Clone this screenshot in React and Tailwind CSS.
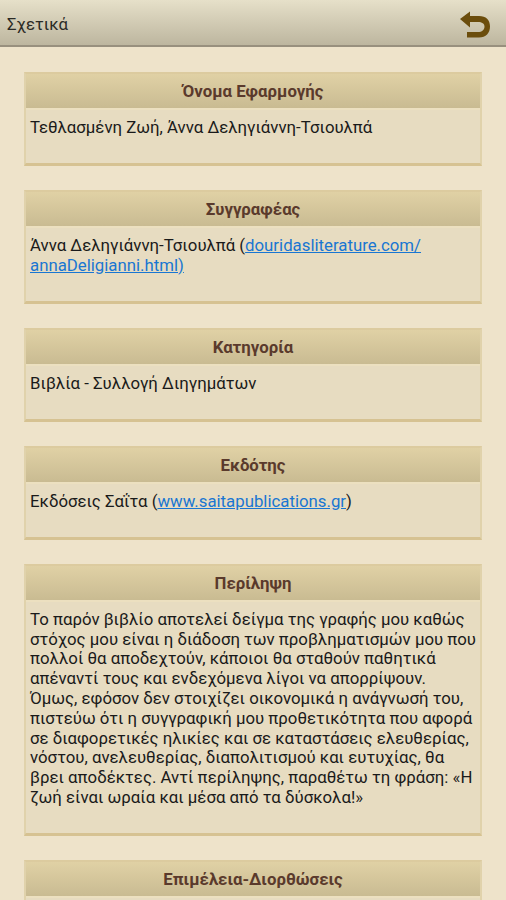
import React from "react";

const link = "text-[#1976d2] underline";

function Card({ title, children }) {
  return (
    <section className="shrink-0 border-x-2 border-x-[#e0d2ab] border-t-2 border-t-[#dccb9f] border-b-[3px] border-b-[#d6c292] bg-[#e7dcc1]">
      <h2 className="h-[36px] border-b-2 border-b-[#ece0c0] bg-gradient-to-b from-[#e0d1a5] to-[#c9bb92] text-center text-[16.8px] leading-[35px] font-bold text-[#5a3a2c]">
        {title}
      </h2>
      <div className="pt-[8px] pr-0 pb-[25.2px] pl-[4px] text-[16.8px] leading-[19.8px] text-[#1a1a1a]">{children}</div>
    </section>
  );
}

export default function App() {
  return (
    <div className="flex h-[900px] w-[506px] flex-col overflow-hidden bg-[#eee3ca] font-['Roboto','Noto_Sans',sans-serif]">
      <header className="flex h-[47px] shrink-0 items-center justify-between border-b-2 border-b-[#98907e] bg-gradient-to-b from-[#e6e0c9] to-[#bdb69f] pt-[4px] pr-[13px] pl-[7px]">
        <span className="text-[16.8px] text-[#2b2b26]">Σχετικά</span>
        <svg width="34" height="32" viewBox="0 0 34 32" aria-hidden="true">
          <path d="M1 10 L11 2.5 V7 H20 C27 7 31 11 31 17.5 C31 24 27 28.5 20 28.5 H8 V23 H19 C23 23 25.5 21 25.5 17.5 C25.5 14.5 23 13 19 13 H11 V18.5 Z" fill="#6b4d0c" />
        </svg>
      </header>
      <main className="flex flex-col gap-6 px-6 pt-[25px]">
        <Card title="Όνομα Εφαρμογής">Τεθλασμένη Ζωή, Άννα Δεληγιάννη-Τσιουλπά</Card>
        <Card title="Συγγραφέας">
          Άννα Δεληγιάννη-Τσιουλπά (<span className={link}>douridasliterature.com/</span>
          <br />
          <span className={link}>annaDeligianni.html)</span>
        </Card>
        <Card title="Κατηγορία">Βιβλία - Συλλογή Διηγημάτων</Card>
        <Card title="Εκδότης">
          Εκδόσεις Σαΐτα (<span className={link}>www.saitapublications.gr</span>)
        </Card>
        <Card title="Περίληψη">
          Το παρόν βιβλίο αποτελεί δείγμα της γραφής μου καθώς στόχος μου είναι η διάδοση των προβληματισμών μου που πολλοί θα αποδεχτούν, κάποιοι θα σταθούν παθητικά απέναντί τους και ενδεχόμενα λίγοι να απορρίψουν.
          <br />
          Όμως, εφόσον δεν στοιχίζει οικονομικά η ανάγνωσή του, πιστεύω ότι η συγγραφική μου προθετικότητα που αφορά σε διαφορετικές ηλικίες και σε καταστάσεις ελευθερίας, νόστου, ανελευθερίας, διαπολιτισμού και ευτυχίας, θα βρει αποδέκτες. Αντί περίληψης, παραθέτω τη φράση: «Η ζωή είναι ωραία και μέσα από τα δύσκολα!»
        </Card>
        <Card title="Επιμέλεια-Διορθώσεις" />
      </main>
    </div>
  );
}
